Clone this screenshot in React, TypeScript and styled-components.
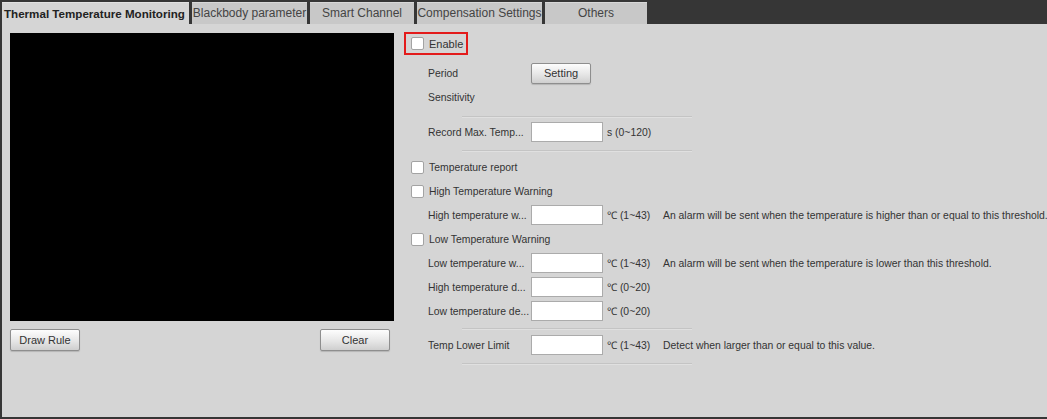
import React, { FC } from 'react';
import styled, { createGlobalStyle } from 'styled-components';

const GlobalStyle = createGlobalStyle`
	html, body {
		margin: 0;
		padding: 0;
		background: #363636;
		font-family: 'Liberation Sans', Arial, sans-serif;
	}
`;

const Page = styled.div`
	width: 1047px;
	height: 419px;
	background: #363636;
	display: flex;
	flex-direction: column;
	overflow: hidden;
`;

const TabBar = styled.div`
	display: flex;
	gap: 3px;
	padding: 2px 0 0 2px;
	height: 22px;
`;

const Tab = styled.div<{ $active?: boolean; $width: number }>`
	width: ${(p) => p.$width}px;
	height: 22px;
	line-height: 21px;
	font-size: ${(p) => (p.$active ? '11.6px' : '12px')};
	text-align: ${(p) => (p.$active ? 'left' : 'center')};
	padding-left: ${(p) => (p.$active ? '2px' : '0')};
	box-sizing: border-box;
	white-space: nowrap;
	overflow: hidden;
	background: ${(p) => (p.$active ? '#d5d5d5' : '#c8c8c8')};
	border-top: 1px solid ${(p) => (p.$active ? '#e2e2e2' : '#d8d8d8')};
	color: ${(p) => (p.$active ? '#222' : '#444')};
	font-weight: ${(p) => (p.$active ? 'bold' : 'normal')};
`;

const Content = styled.div`
	margin-left: 2px;
	height: 393px;
	background: #d5d5d5;
	display: flex;
	gap: 10px;
	padding: 9px 0 0 8px;
	box-sizing: border-box;
`;

const LeftPanel = styled.div`
	width: 384px;
	display: flex;
	flex-direction: column;
	gap: 8px;
`;

const Video = styled.div`
	width: 384px;
	height: 288px;
	background: #000;
`;

const ButtonRow = styled.div`
	display: flex;
	justify-content: space-between;
	padding-right: 4px;
`;

const Button = styled.button<{ $width: number; $height?: number }>`
	width: ${(p) => p.$width}px;
	height: ${(p) => p.$height ?? 22}px;
	font-family: 'Liberation Sans', Arial, sans-serif;
	font-size: 11px;
	color: #333;
	border: 1px solid #8e8e8e;
	border-radius: 2px;
	background: linear-gradient(#fdfdfd, #e6e6e6 55%, #cfcfcf);
	box-shadow: 0 1px 1px rgba(0, 0, 0, 0.15);
	padding: 0;
	cursor: pointer;
`;

const Form = styled.div`
	display: flex;
	flex-direction: column;
	margin-top: -1px;
	color: #333;
	font-size: 10.4px;
`;

const Highlight = styled.div`
	display: flex;
	align-items: center;
	gap: 5px;
	width: 64px;
	height: 23px;
	box-sizing: border-box;
	border: 2px solid #e31b1b;
	padding-left: 5px;
	font-size: 11px;
`;

const Checkbox = styled.span`
	display: inline-block;
	width: 11px;
	height: 11px;
	background: #fff;
	border: 1px solid #a3a3a3;
	border-radius: 2px;
	flex-shrink: 0;
`;

const CheckRow = styled.div`
	display: flex;
	align-items: center;
	gap: 5px;
	height: 24px;
	padding-left: 7px;
`;

const Row = styled.div<{ $mt?: number }>`
	display: flex;
	align-items: center;
	height: 24px;
	padding-left: 24px;
	margin-top: ${(p) => p.$mt ?? 0}px;
	white-space: nowrap;
`;

const Label = styled.span`
	width: 103px;
	flex-shrink: 0;
`;

const Input = styled.input`
	width: 72px;
	height: 20px;
	box-sizing: border-box;
	border: 1px solid #ababab;
	background: #fff;
	padding: 0 3px;
	margin: 0;
	font-size: 11px;
`;

const Unit = styled.span`
	width: 56px;
	padding-left: 4px;
	flex-shrink: 0;
`;

const Hint = styled.span``;

const Divider = styled.div<{ $mt: number; $mb: number }>`
	margin: ${(p) => p.$mt}px 0 ${(p) => p.$mb}px 58px;
	width: 230px;
	height: 1px;
	background: #c4c4c4;
	border-bottom: 1px solid #e0e0e0;
`;

const tabs = [
	{ name: 'Thermal Temperature Monitoring', width: 187, active: true },
	{ name: 'Blackbody parameter', width: 115 },
	{ name: 'Smart Channel', width: 104 },
	{ name: 'Compensation Settings', width: 125 },
	{ name: 'Others', width: 102 },
];

const ValueRow: FC<{ label: string; unit: string; hint?: string; mt?: number }> = ({
	label,
	unit,
	hint,
	mt,
}) => (
	<Row $mt={mt}>
		<Label>{label}</Label>
		<Input type='text' />
		<Unit>{unit}</Unit>
		{hint && <Hint>{hint}</Hint>}
	</Row>
);

const App: FC = () => {
	return (
		<>
			<GlobalStyle />
			<Page>
				<TabBar>
					{tabs.map((t) => (
						<Tab key={t.name} $active={t.active} $width={t.width}>
							{t.name}
						</Tab>
					))}
				</TabBar>
				<Content>
					<LeftPanel>
						<Video />
						<ButtonRow>
							<Button $width={70}>Draw Rule</Button>
							<Button $width={70}>Clear</Button>
						</ButtonRow>
					</LeftPanel>
					<Form>
						<Highlight>
							<Checkbox />
							<span>Enable</span>
						</Highlight>
						<Row $mt={6}>
							<Label>Period</Label>
							<Button $width={60} $height={21}>
								Setting
							</Button>
						</Row>
						<Row>
							<Label>Sensitivity</Label>
						</Row>
						<Divider $mt={7} $mb={2} />
						<ValueRow label='Record Max. Temp...' unit='s (0~120)' />
						<Divider $mt={6} $mb={3} />
						<CheckRow>
							<Checkbox />
							<span>Temperature report</span>
						</CheckRow>
						<CheckRow>
							<Checkbox />
							<span>High Temperature Warning</span>
						</CheckRow>
						<ValueRow
							label='High temperature w...'
							unit='℃ (1~43)'
							hint='An alarm will be sent when the temperature is higher than or equal to this threshold.'
						/>
						<CheckRow>
							<Checkbox />
							<span>Low Temperature Warning</span>
						</CheckRow>
						<ValueRow
							label='Low temperature w...'
							unit='℃ (1~43)'
							hint='An alarm will be sent when the temperature is lower than this threshold.'
						/>
						<ValueRow label='High temperature d...' unit='℃ (0~20)' />
						<ValueRow label='Low temperature de...' unit='℃ (0~20)' />
						<Divider $mt={5} $mb={3} />
						<ValueRow
							label='Temp Lower Limit'
							unit='℃ (1~43)'
							hint='Detect when larger than or equal to this value.'
						/>
						<Divider $mt={6} $mb={0} />
					</Form>
				</Content>
			</Page>
		</>
	);
};

export default App;
